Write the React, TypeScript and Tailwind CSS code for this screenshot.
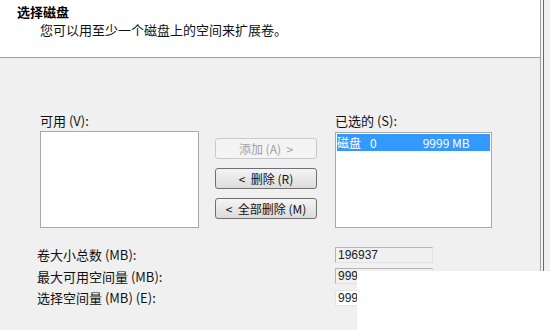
const FONT = "font-['SimSun','Noto_Sans_CJK_SC',sans-serif]";

function WinButton({ label, disabled }: { label: string; disabled?: boolean }) {
  return (
    <button
      className={`h-[21px] w-[102px] whitespace-pre rounded-[3px] border text-[12px] leading-none ${
        disabled
          ? "border-[#c9c9c9] bg-[#f4f4f4] text-[#a0a0a0]"
          : "border-[#707070] bg-gradient-to-b from-[#f4f4f4] to-[#dcdcdc] text-[#111]"
      }`}
    >
      {label}
    </button>
  );
}

function FieldRow({
  label,
  value,
  editable,
}: {
  label: string;
  value: string;
  editable?: boolean;
}) {
  return (
    <div className="flex h-[21.5px] items-center">
      <span className="w-[298px] whitespace-pre text-[13px] text-[#111]">{label}</span>
      <div
        className={`flex h-[16px] w-[98px] items-center border px-[2px] font-['Liberation_Sans',sans-serif] text-[12px] text-[#222] ${
          editable
            ? "border-[#e3e3e3] bg-white"
            : "border-t-[#b5b5b5] border-l-[#b5b5b5] border-r-[#e3e3e3] border-b-[#e3e3e3] bg-[#f0f0f0]"
        }`}
      >
        {value}
      </div>
    </div>
  );
}

export default function App() {
  return (
    <div className={`relative flex h-[330px] w-[550px] overflow-hidden bg-[#f0f0f0] ${FONT}`}>
      <div className="flex w-[540px] flex-col">
        {/* header */}
        <div className="h-[58px] border-b border-[#a0a0a0] bg-white pl-[17px] pt-[4px]">
          <div className="text-[13px] font-bold leading-[16px] text-black">选择磁盘</div>
          <div className="mt-[2px] pl-[23px] text-[13px] leading-[16px] text-[#111]">
            您可以用至少一个磁盘上的空间来扩展卷。
          </div>
        </div>

        {/* body */}
        <div className="pl-[37px] pt-[55px]">
          <div className="flex">
            <div className="ml-[3px] flex flex-col">
              <span className="h-[16px] whitespace-pre text-[13px] leading-[16px] text-[#111]">可用 (V):</span>
              <div className="mt-[2px] h-[97px] w-[159px] border border-[#a9a9a9] bg-white" />
            </div>

            <div className="ml-[16px] mt-[25px] flex flex-col gap-[9px]">
              <WinButton label="添加 (A)  >" disabled />
              <WinButton label="<  删除 (R)" />
              <WinButton label="<  全部删除 (M)" />
            </div>

            <div className="ml-[18px] flex flex-col">
              <span className="h-[16px] whitespace-pre text-[13px] leading-[16px] text-[#111]">已选的 (S):</span>
              <div className="mt-[3px] h-[96px] w-[157px] border border-[#a9a9a9] bg-white p-px">
                <div className="flex h-[17px] items-center whitespace-nowrap bg-[#3399ff] text-[12px] text-white">
                  <span>磁盘</span>
                  <span className="ml-[9px]">0</span>
                  <span className="ml-[46px]">9999 MB</span>
                </div>
              </div>
            </div>
          </div>

          <div className="mt-[16px] flex flex-col">
            <FieldRow label="卷大小总数 (MB):" value="196937" />
            <FieldRow label="最大可用空间量 (MB):" value="9999" />
            <FieldRow label="选择空间量 (MB) (E):" value="9999" editable />
          </div>
        </div>
      </div>

      {/* window frame edge */}
      <div className="flex flex-1">
        <div className="w-px bg-[#a0a0a0]" />
        <div className="w-[2px] bg-[#f4f4f4]" />
        <div className="w-px bg-[#6a6a6a]" />
        <div className="flex-1 bg-[#f0f0f0]" />
      </div>

      {/* white patch covering lower right */}
      <div className="absolute left-[357px] top-[271px] h-[59px] w-[193px] bg-white" />
    </div>
  );
}
